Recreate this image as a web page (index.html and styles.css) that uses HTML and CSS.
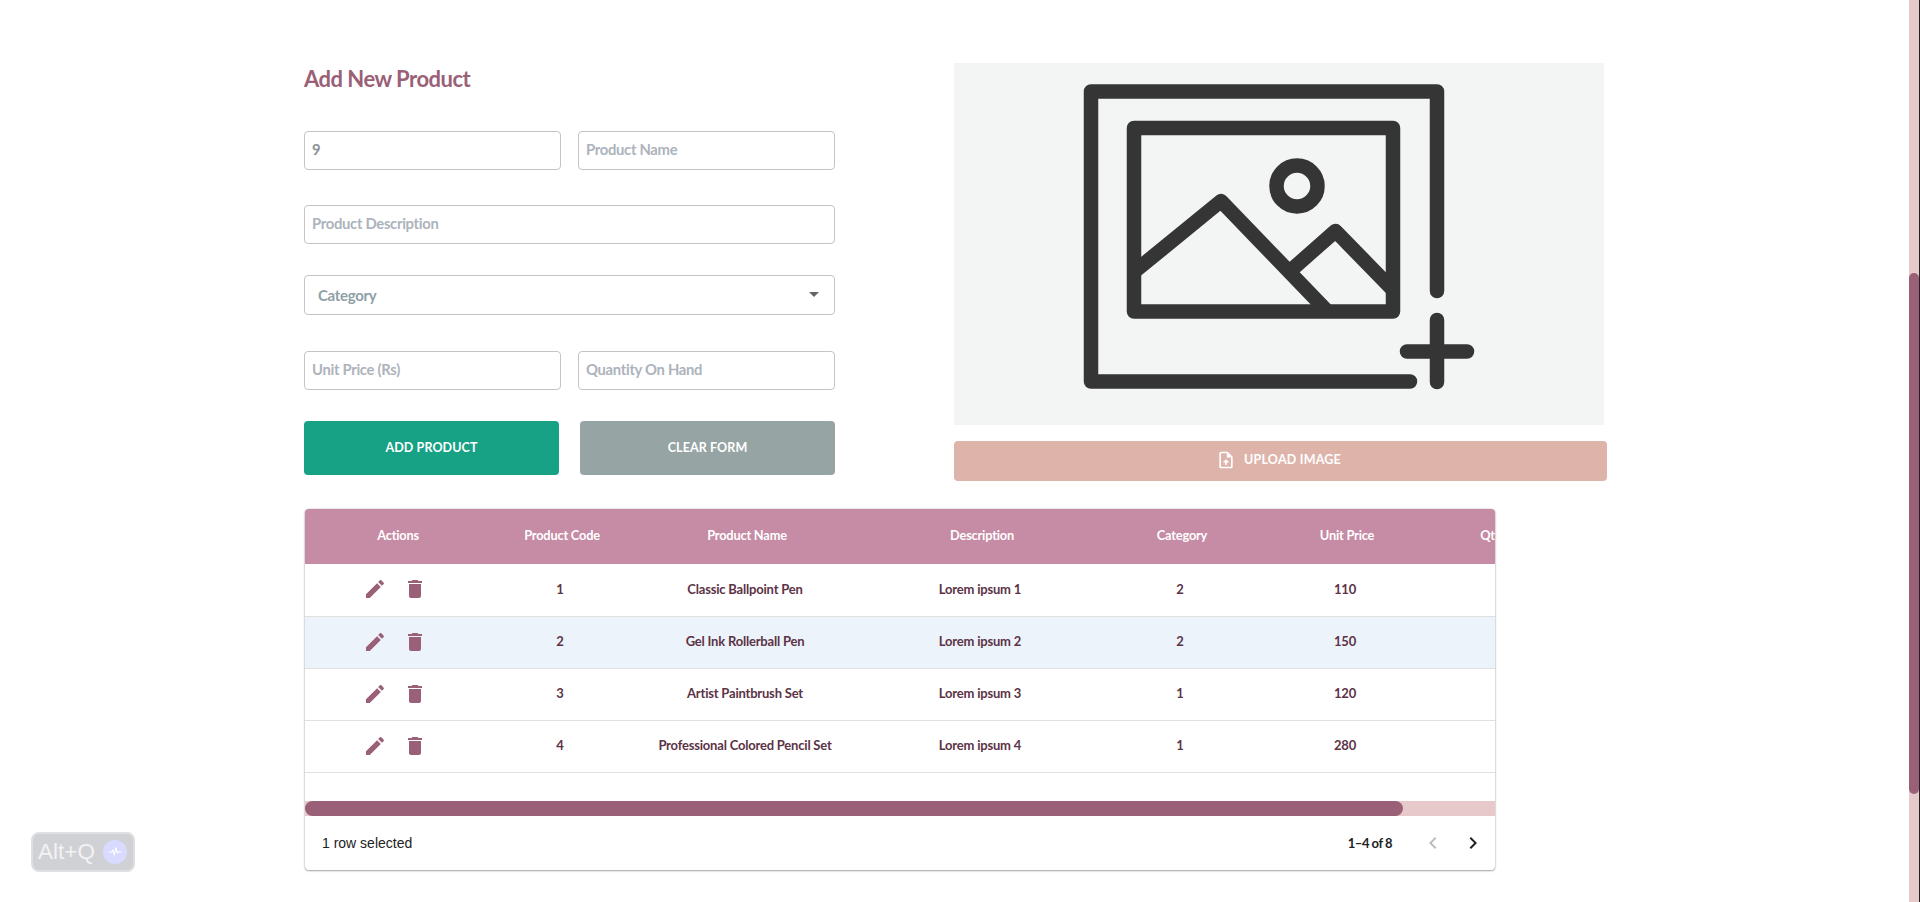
FILE: index.html
```html
<!DOCTYPE html>
<html lang="en">
<head>
<meta charset="utf-8">
<title>Add New Product</title>
<link rel="stylesheet" href="styles.css">
</head>
<body>
<main class="page">
  <section class="top">
    <form class="form">
      <h1 class="title">Add New Product</h1>
      <div class="row row-a">
        <input class="field field-value" value="9">
        <input class="field" placeholder="Product Name">
      </div>
      <div class="row row-b">
        <input class="field" placeholder="Product Description">
      </div>
      <div class="select">
        <span>Category</span>
        <svg class="caret" viewBox="0 0 10 5"><path d="M0 0h10L5 5z"/></svg>
      </div>
      <div class="row row-c">
        <input class="field" placeholder="Unit Price (Rs)">
        <input class="field" placeholder="Quantity On Hand">
      </div>
      <div class="buttons">
        <button type="button" class="btn btn-add">ADD PRODUCT</button>
        <button type="button" class="btn btn-clear">CLEAR FORM</button>
      </div>
    </form>
    <div class="media">
      <div class="preview">
        <svg class="preview-icon" viewBox="0 0 650 362">
          <g fill="none" stroke="#353535" stroke-width="14.5" stroke-linecap="round" stroke-linejoin="round">
            <path class="butt" d="M180 209 267 138 374 249"/>
            <path class="butt" d="M335 209 381.5 168 439 227"/>
            <path d="M483 228V28.5H137V318.5H456"/>
            <rect x="180" y="65" width="259" height="183.5"/>
            <circle cx="343" cy="123" r="20.5"/>
            <path d="M483 257V319M453 288.5H513"/>
          </g>
        </svg>
      </div>
      <button type="button" class="upload">
        <svg class="upload-icon" viewBox="0 0 24 24"><path d="M14 2H6c-1.100 0-2 .9-2 2v16c0 1.100.9 2 2 2h12c1.100 0 2-.9 2-2V8l-6-6zm4 18H6V4h7v5h5v11zM8 15h3v3h2v-3h3l-4-4z"/></svg>
        <span class="upload-text">UPLOAD IMAGE</span>
      </button>
    </div>
  </section>

  <section class="grid">
    <div class="scroller">
      <div class="grid-inner">
        <div class="cells head">
          <div>Actions</div><div>Product Code</div><div>Product Name</div><div>Description</div><div>Category</div><div>Unit Price</div><div class="head-qty">Qty On Hand</div>
        </div>
        <div class="cells body-row">
          <div class="actions"><svg viewBox="0 0 24 24"><path d="M3 17.250V21h3.750L17.810 9.940l-3.750-3.750L3 17.250zM20.710 7.040c.39-.39.39-1.020 0-1.410l-2.340-2.340c-.39-.39-1.020-.39-1.410 0l-1.830 1.830 3.750 3.750 1.830-1.830z"/></svg><svg viewBox="0 0 24 24"><path d="M6 19c0 1.100.9 2 2 2h8c1.100 0 2-.9 2-2V7H6v12zM19 4h-3.500l-1-1h-5l-1 1H5v2h14V4z"/></svg></div>
          <div>1</div><div>Classic Ballpoint Pen</div><div>Lorem ipsum 1</div><div>2</div><div>110</div><div></div>
        </div>
        <div class="cells body-row selected">
          <div class="actions"><svg viewBox="0 0 24 24"><path d="M3 17.250V21h3.750L17.810 9.940l-3.750-3.750L3 17.250zM20.710 7.040c.39-.39.39-1.020 0-1.410l-2.340-2.340c-.39-.39-1.020-.39-1.410 0l-1.830 1.830 3.750 3.750 1.830-1.830z"/></svg><svg viewBox="0 0 24 24"><path d="M6 19c0 1.100.9 2 2 2h8c1.100 0 2-.9 2-2V7H6v12zM19 4h-3.500l-1-1h-5l-1 1H5v2h14V4z"/></svg></div>
          <div>2</div><div>Gel Ink Rollerball Pen</div><div>Lorem ipsum 2</div><div>2</div><div>150</div><div></div>
        </div>
        <div class="cells body-row">
          <div class="actions"><svg viewBox="0 0 24 24"><path d="M3 17.250V21h3.750L17.810 9.940l-3.750-3.750L3 17.250zM20.710 7.040c.39-.39.39-1.020 0-1.410l-2.340-2.340c-.39-.39-1.020-.39-1.410 0l-1.830 1.830 3.750 3.750 1.830-1.830z"/></svg><svg viewBox="0 0 24 24"><path d="M6 19c0 1.100.9 2 2 2h8c1.100 0 2-.9 2-2V7H6v12zM19 4h-3.500l-1-1h-5l-1 1H5v2h14V4z"/></svg></div>
          <div>3</div><div>Artist Paintbrush Set</div><div>Lorem ipsum 3</div><div>1</div><div>120</div><div></div>
        </div>
        <div class="cells body-row">
          <div class="actions"><svg viewBox="0 0 24 24"><path d="M3 17.250V21h3.750L17.810 9.940l-3.750-3.750L3 17.250zM20.710 7.040c.39-.39.39-1.020 0-1.410l-2.340-2.340c-.39-.39-1.020-.39-1.410 0l-1.830 1.830 3.750 3.750 1.830-1.830z"/></svg><svg viewBox="0 0 24 24"><path d="M6 19c0 1.100.9 2 2 2h8c1.100 0 2-.9 2-2V7H6v12zM19 4h-3.500l-1-1h-5l-1 1H5v2h14V4z"/></svg></div>
          <div>4</div><div>Professional Colored Pencil Set</div><div>Lorem ipsum 4</div><div>1</div><div>280</div><div></div>
        </div>
        <div class="filler"></div>
      </div>
    </div>
    <div class="hbar"><div class="hthumb"></div></div>
    <footer class="grid-foot">
      <span class="selected-count">1 row selected</span>
      <div class="pager">
        <span class="pager-text">1–4 of 8</span>
        <svg class="chev chev-off" viewBox="0 0 24 24"><path d="M15.410 7.410L14 6l-6 6 6 6 1.410-1.410L10.830 12z"/></svg>
        <svg class="chev" viewBox="0 0 24 24"><path d="M10 6L8.590 7.410 13.170 12l-4.580 4.590L10 18l6-6z"/></svg>
      </div>
    </footer>
  </section>
</main>

<div class="hotkey">
  <span>Alt+Q</span>
  <span class="hotkey-dot"><svg viewBox="0 0 16 16"><path d="M1 8h3l1.500-2 1.500 5 2-8 1.500 6 1-1h4" fill="none" stroke="#fff" stroke-width="1.300"/></svg></span>
</div>
<div class="page-scroll"><div class="page-thumb"></div></div>
</body>
</html>
```
FILE: styles.css
```css
* { box-sizing: border-box; }
html, body { margin: 0; height: 902px; overflow: hidden; background: #fff; }
body { font-family: Lato, "Noto Sans", sans-serif; }

.page { padding: 63px 0 0 304px; }

.top { display: flex; align-items: flex-start; margin-bottom: 28px; }

.form { width: 531px; margin-right: 119px; display: flex; flex-direction: column; }
.title {
  margin: 0 0 38px;
  height: 30px;
  line-height: 32px;
  font-size: 22px;
  font-weight: 700;
  letter-spacing: -.5px;
  color: #9a6078;
}
.row { display: flex; gap: 17px; }
.row-a { margin-bottom: 35px; }
.row-b { margin-bottom: 31px; }
.row-c { margin-bottom: 31px; }
.field {
  flex: 1 1 0;
  min-width: 0;
  height: 39px;
  padding: 0 7px 4px;
  border: 1px solid #c4c4c4;
  border-radius: 4px;
  background: #fff;
  font: 700 14.800px/1 Lato, sans-serif;
  letter-spacing: -.3px;
  color: #8d929a;
  outline: none;
}
.field::placeholder { color: #adb3bc; opacity: 1; }

.select {
  height: 40px;
  margin-bottom: 36px;
  padding: 0 13px 1px;
  display: flex;
  align-items: center;
  justify-content: space-between;
  border: 1px solid #c4c4c4;
  border-radius: 4px;
  font-size: 15px;
  font-weight: 700;
  letter-spacing: -.3px;
  color: #8ea0a6;
}
.caret { width: 10px; height: 5px; fill: #666; margin-right: 2px; }

.buttons { display: flex; justify-content: space-between; }
.btn {
  width: 255px;
  height: 54px;
  border: 0;
  border-radius: 4px;
  font: 700 12.500px/1 Lato, sans-serif;
  letter-spacing: .1px;
  color: #fff;
}
.btn-add { background: #17a185; }
.btn-clear { background: #96a5a4; }

.media { width: 653px; display: flex; flex-direction: column; }
.preview { width: 650px; height: 362px; background: #f3f5f4; margin-bottom: 16px; }
.preview-icon { display: block; width: 650px; height: 362px; }
.butt { stroke-linecap: butt; }
.upload {
  width: 653px;
  height: 40px;
  padding: 0 4px 2px 0;
  border: 0;
  border-radius: 4px;
  background: #deb4aa;
  display: flex;
  align-items: center;
  justify-content: center;
  gap: 8px;
  font: 700 12.500px/1 Lato, sans-serif;
  letter-spacing: .2px;
  color: #fff;
}
.upload-icon { width: 20px; height: 20px; fill: #fff; }

.grid {
  width: 1190px;
  margin-left: 1px;
  border-radius: 4px;
  background: #fff;
  box-shadow: 0 0 2px rgba(0,0,0,.25), 0 1px 2px rgba(0,0,0,.3);
  overflow: hidden;
}
.scroller { overflow: hidden; }
.hbar { height: 15px; background: #e7c9cb; }
.hthumb { width: 1098px; height: 15px; border-radius: 8px; background: #9a6078; }
.grid-inner { width: 1290px; }

.cells {
  display: grid;
  grid-template-columns: 186px 142px 228px 242px 158px 172px 162px;
  text-align: center;
}
.cells > div { display: flex; align-items: center; justify-content: center; white-space: nowrap; }
.head { height: 55px; padding-bottom: 4px; background: #c68ba5; color: #fff; font-size: 12.800px; font-weight: 700; letter-spacing: -.2px; }
.head > .head-qty { padding-left: 6px; }
.body-row {
  height: 52px;
  border-bottom: 1px solid #e0e0e0;
  background: #fff;
  color: #5c3346;
  font-size: 13px;
  font-weight: 700;
  letter-spacing: -.2px;
}
.body-row > div { padding: 0 4px 3px 0; }
.body-row:nth-child(2) { height: 53px; }
.body-row.selected { background: #ecf3fb; }
.body-row > .actions { gap: 16px; padding: 0 6px 2px 0; }
.actions svg { width: 24px; height: 24px; fill: #9a6078; }
.filler { height: 28px; }

.grid-foot {
  height: 54px;
  display: flex;
  align-items: center;
  justify-content: space-between;
  padding: 0 10px 0 17px;
}
.selected-count { font: 14px/1 "Liberation Sans", sans-serif; color: #222; }
.pager { display: flex; align-items: center; }
.pager-text { font-size: 13px; font-weight: 700; letter-spacing: -.5px; color: #222; margin-right: 29px; }
.chev { width: 24px; height: 24px; fill: #222; }
.chev-off { fill: #bdbdbd; margin-right: 16px; }

.hotkey {
  position: fixed;
  left: 31px;
  top: 832px;
  width: 104px;
  height: 40px;
  padding: 0 6px 0 5px;
  display: flex;
  align-items: center;
  justify-content: space-between;
  border: 2px solid #dfdfe1;
  border-radius: 8px;
  background: #d0d1d4;
  font: 22.500px/1 "Liberation Sans", sans-serif;
  color: #f2f2f4;
}
.hotkey-dot {
  width: 24px;
  height: 24px;
  border-radius: 50%;
  background: #d8daff;
  display: flex;
  align-items: center;
  justify-content: center;
}
.hotkey-dot svg { width: 14px; height: 14px; }

.page-scroll {
  position: fixed;
  right: 0;
  top: 0;
  width: 11px;
  height: 902px;
  padding-top: 273px;
  background: #e7c9cb;
  border-right: 1px solid #222;
}
.page-thumb { height: 521px; border-radius: 5px; background: #9a6078; }
```
